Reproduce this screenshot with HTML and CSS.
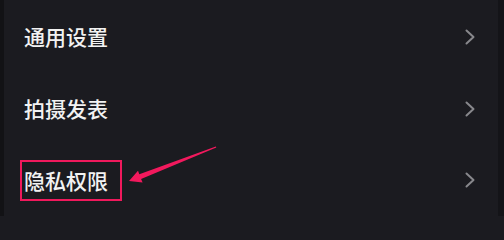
FILE: index.html
```html
<!DOCTYPE html>
<html lang="zh-CN">
<head>
<meta charset="utf-8">
<link rel="stylesheet" href="styles.css">
</head>
<body>
<div class="screen">
  <div class="panel">
    <div class="row">
      <span class="label">通用设置</span>
      <svg class="chev" width="10" height="16" viewBox="0 0 10 16"><polyline points="1.5,1.5 8.5,8 1.5,14.5" fill="none" stroke="#88888c" stroke-width="2" stroke-linecap="round" stroke-linejoin="round"/></svg>
    </div>
    <div class="row">
      <span class="label">拍摄发表</span>
      <svg class="chev" width="10" height="16" viewBox="0 0 10 16"><polyline points="1.5,1.5 8.5,8 1.5,14.5" fill="none" stroke="#88888c" stroke-width="2" stroke-linecap="round" stroke-linejoin="round"/></svg>
    </div>
    <div class="row">
      <span class="label boxed">隐私权限</span>
      <svg class="chev" width="10" height="16" viewBox="0 0 10 16"><polyline points="1.5,1.5 8.5,8 1.5,14.5" fill="none" stroke="#88888c" stroke-width="2" stroke-linecap="round" stroke-linejoin="round"/></svg>
    </div>
  </div>
  <div class="edge"></div>
  <svg class="arrow" width="504" height="216" viewBox="0 0 504 216">
    <polygon fill="#f2195d" points="216.3,147.5 141.1,178.9 142.6,182.6 129,181 138,170.8 139.3,174.3 215.8,146.6"/>
  </svg>
</div>
</body>
</html>
```
FILE: styles.css
```css
html, body {
  margin: 0;
  padding: 0;
  background: #1b1b20;
}
.screen {
  position: relative;
  width: 504px;
  height: 216px;
  display: flex;
  overflow: hidden;
  background: #1b1b20;
  border-left: 4px solid #121215;
  box-sizing: border-box;
}
.panel {
  flex: 1;
  padding-top: 1px;
  display: flex;
  flex-direction: column;
}
.row {
  height: 72px;
  display: flex;
  align-items: center;
  justify-content: space-between;
  padding: 0 23px 0 20px;
}
.label {
  font-family: "Noto Sans CJK SC", "Noto Sans", sans-serif;
  font-size: 21px;
  font-weight: 500;
  color: #f2f2f2;
  line-height: 37px;
}
.boxed {
  border: 2px solid #f0195c;
  padding: 0 12px 0 2px;
  margin-left: -4px;
}
.chev {
  display: block;
}
.edge {
  width: 6px;
  background: #141418;
}
.arrow {
  position: absolute;
  left: -4px;
  top: 0;
  pointer-events: none;
}
```
